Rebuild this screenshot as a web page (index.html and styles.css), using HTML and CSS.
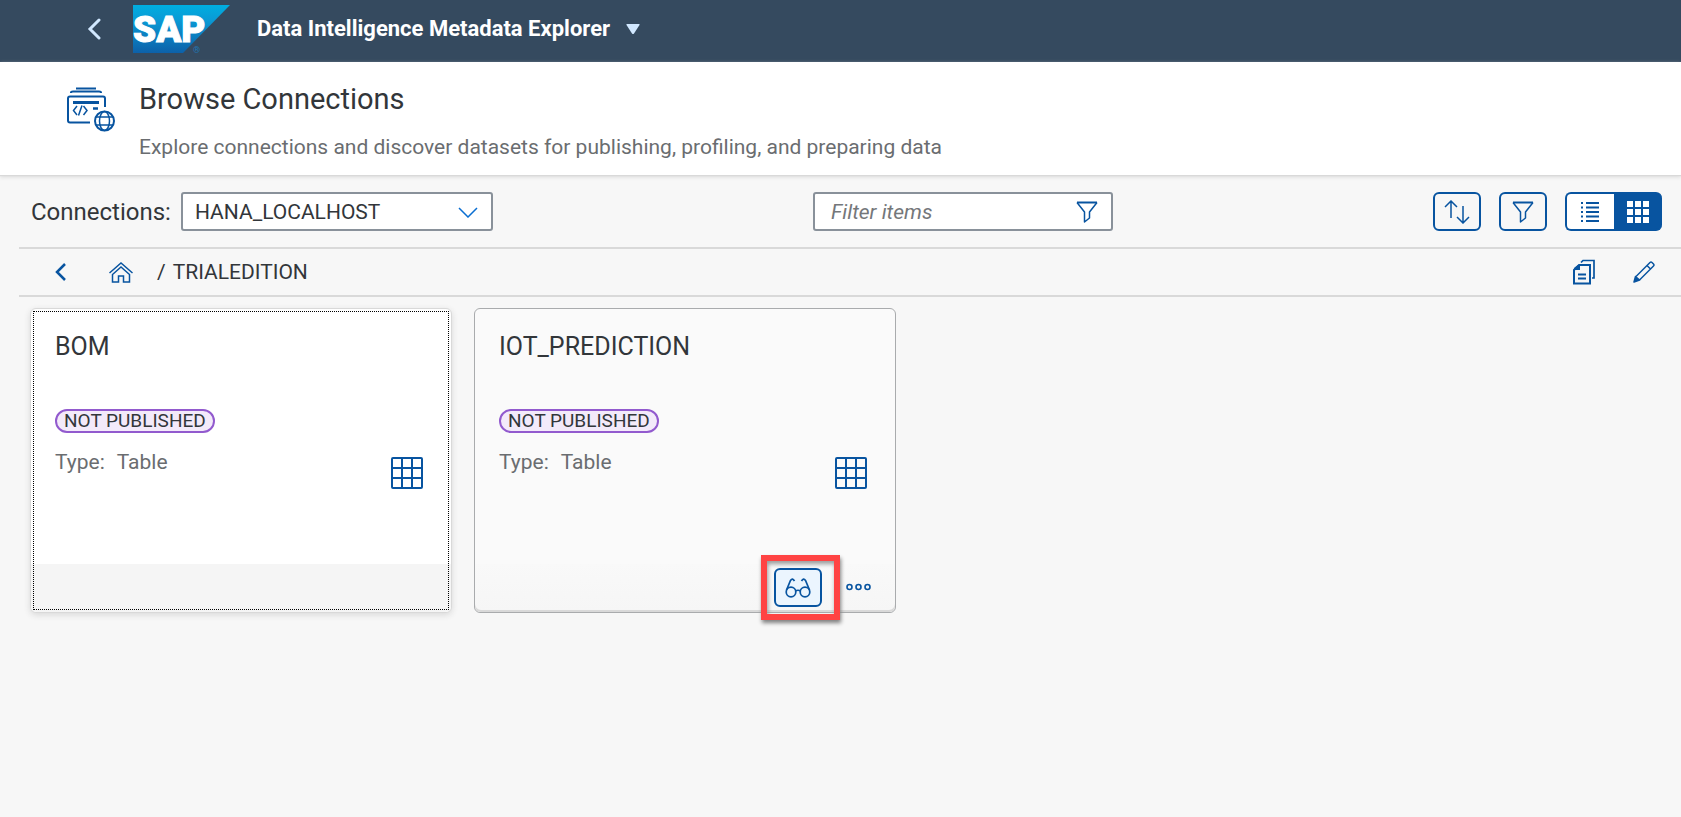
FILE: index.html
```html
<!DOCTYPE html>
<html lang="en">
<head>
<meta charset="utf-8">
<title>Data Intelligence Metadata Explorer</title>
<link rel="stylesheet" href="styles.css">
</head>
<body>
<header class="shell">
  <button class="shell-back" type="button" aria-label="Back">
    <svg width="14" height="22" viewBox="0 0 14 22"><path d="M12 2 3 11l9 9" fill="none" stroke="#d1e8ff" stroke-width="3" stroke-linecap="round"/></svg>
  </button>
  <svg class="logo" width="98" height="56" viewBox="0 -4 98 56" role="img" aria-label="SAP">
    <defs><linearGradient id="logo-fill" x1="0" y1="0" x2="0" y2="1"><stop offset="0" stop-color="#00aee0"/><stop offset=".3" stop-color="#0a9bd6"/><stop offset="1" stop-color="#0d61a9"/></linearGradient></defs>
    <path d="M0 0h97L50 48H0z" fill="url(#logo-fill)"/>
    <text class="logo-text" x="0" y="37">SAP</text>
    <text class="logo-mark" x="60" y="48">®</text>
  </svg>
  <button class="shell-title" type="button">Data Intelligence Metadata Explorer
    <svg width="16" height="12" viewBox="0 0 16 12"><path d="M2 1h12q1 0 .5 1L9 10.500q-1 1-2 0L1.500 2Q1 1 2 1z" fill="#d1e8ff"/></svg>
  </button>
</header>

<section class="page-head">
  <svg class="page-icon" width="50" height="46" viewBox="0 0 50 46" fill="none" stroke="#0854a0" stroke-width="2">
    <path d="M10 1.500h20M5 6V5.500q0-1 2-1h26q2 0 2 1V6M24 35.500H4q-2 0-2-2v-22q0-2 2-2h33q2 0 2 2V20"/>
    <path d="M7 15.500h26" stroke-width="3"/><path d="M27 21.500h5" stroke-width="2.500"/>
    <path d="m11 19-3.500 4.500L11 28M17.500 19l3.500 4.500-3.500 4.500M16 18.500l-3.500 10" stroke-width="1.500"/>
    <circle cx="38.500" cy="34" r="9.500"/><ellipse cx="38.500" cy="34" rx="5" ry="9.500" stroke-width="1.500"/>
    <path d="M30 30h17M30 38h17" stroke-width="1.500"/>
  </svg>
  <div>
    <h1 class="page-title">Browse Connections</h1>
    <p class="page-sub">Explore connections and discover datasets for publishing, profiling, and preparing data</p>
  </div>
</section>

<main class="content">
  <div class="toolbar">
    <div class="connection">
      <label for="connection">Connections:</label>
      <span class="field select-field">
        <select id="connection"><option>HANA_LOCALHOST</option></select>
        <svg class="field-icon" width="20" height="12" viewBox="0 0 20 12"><path d="m1 2 9 9 9-9" fill="none" stroke="#0a6ed1" stroke-width="1.500"/></svg>
      </span>
    </div>
    <span class="field filter-field">
      <input type="text" placeholder="Filter items" aria-label="Filter items">
      <svg class="field-icon" width="22" height="22" viewBox="0 0 22 22"><use href="#funnel"/></svg>
    </span>
    <div class="actions">
      <button class="btn" type="button" aria-label="Sort"><svg width="26" height="24" viewBox="0 0 26 24" fill="none" stroke="#0854a0" stroke-width="1.500"><path d="M7 18V1M1 7l6-6 6 6M19 6v17M13 17l6 6 6-6"/></svg></button>
      <button class="btn" type="button" aria-label="Filter"><svg width="22" height="22" viewBox="0 0 22 22"><g id="funnel" fill="none" stroke="#0854a0"><path d="M1 1.500h20" stroke-width="2"/><path d="M1 1.500 8.500 11v10l5-4v-6L21 1.500" stroke-width="1.500" stroke-linejoin="round"/></g></svg></button>
      <div class="segmented">
        <button class="seg" type="button" aria-label="List view"><svg width="20" height="22" viewBox="0 0 20 22" stroke="#0854a0" stroke-width="2"><path d="M6 2h13M6 6.500h13M6 11h13M6 15.500h13M6 20h13M1 2h2M1 6.500h2M1 11h2M1 15.500h2M1 20h2"/></svg></button>
        <button class="seg seg-on" type="button" aria-label="Grid view" aria-pressed="true"><svg width="22" height="22" viewBox="0 0 22 22" fill="#fff"><path d="M0 0h6v6H0zM8 0h6v6H8zM16 0h6v6h-6zM0 8h6v6H0zM8 8h6v6H8zM16 8h6v6h-6zM0 16h6v6H0zM8 16h6v6H8zM16 16h6v6h-6z"/></svg></button>
      </div>
    </div>
  </div>

  <nav class="crumbs" aria-label="Breadcrumb">
    <button class="icon-btn crumb-back" type="button" aria-label="Up"><svg width="12" height="18" viewBox="0 0 12 18"><path d="M10 1 2 9l8 8" fill="none" stroke="#0854a0" stroke-width="2.500"/></svg></button>
    <a class="crumb-home" href="#" aria-label="Home"><svg width="24" height="21" viewBox="0 0 24 21" fill="none" stroke="#0854a0" stroke-width="1.500"><path d="M.500 11 12 1l11.500 10"/><path d="M3.500 12.500V20h6v-6h5v6h6v-7.500L12 5z"/></svg></a>
    <span class="crumb-sep">/</span>
    <span class="crumb-name">TRIALEDITION</span>
    <div class="crumb-actions">
      <button class="icon-btn" type="button" aria-label="Copy"><svg width="24" height="26" viewBox="0 0 24 26" fill="none" stroke="#0854a0" stroke-width="2"><path d="M7 6h11v18.500H2V11z"/><path d="M2 11V9l4-3h2v5z" fill="#0854a0" stroke="none"/><path d="M9 3.500 11 1.500h11v17.500h-2" stroke-width="1.700"/><path d="M6 15.500h8M6 19.500h8"/></svg></button>
      <button class="icon-btn" type="button" aria-label="Edit"><svg width="22" height="22" viewBox="0 0 22 22" fill="none" stroke="#0854a0" stroke-width="1.500" stroke-linejoin="round"><path d="M3 15.500 17 1.500q1-1 2 0l1.500 1.500q1 1 0 2L6.500 19M14 4.500 17.500 8"/><path d="m1 21 1.500-5.500L6.500 19z" fill="#0854a0"/></svg></button>
    </div>
  </nav>

  <div class="cards">
    <article class="card card-focus" tabindex="0">
      <div class="card-body">
        <h2 class="card-title">BOM</h2>
        <span class="badge">NOT PUBLISHED</span>
        <p class="card-type"><span>Type:</span><span>Table</span></p>
        <svg class="table-icon" width="32" height="32" viewBox="0 0 32 32" fill="none" stroke="#0854a0" stroke-width="2"><rect x="1" y="1" width="30" height="30" rx="1"/><path d="M11 1v30M21 1v30M1 11h30M1 21h30"/></svg>
      </div>
      <div class="card-foot"></div>
    </article>
    <article class="card card-hover" tabindex="0">
      <div class="card-body">
        <h2 class="card-title">IOT_PREDICTION</h2>
        <span class="badge">NOT PUBLISHED</span>
        <p class="card-type"><span>Type:</span><span>Table</span></p>
        <svg class="table-icon" width="32" height="32" viewBox="0 0 32 32" fill="none" stroke="#0854a0" stroke-width="2"><rect x="1" y="1" width="30" height="30" rx="1"/><path d="M11 1v30M21 1v30M1 11h30M1 21h30"/></svg>
      </div>
      <div class="card-foot">
        <button class="btn btn-view" type="button" aria-label="View"><svg width="26" height="22" viewBox="0 0 26 22" fill="none" stroke="#0854a0" stroke-width="1.700"><circle cx="6" cy="16" r="4.800"/><circle cx="20" cy="16" r="4.800"/><path d="M10.500 15q2.500-1.500 5 0M1.500 14 5.500 4.500Q7.500 1.500 9.500 5M24.500 14l-4-9.500q-2-3-4 .500"/></svg></button>
        <button class="icon-btn" type="button" aria-label="More"><svg width="25" height="8" viewBox="0 0 25 8" fill="none" stroke="#0854a0" stroke-width="1.600"><circle cx="3.500" cy="4" r="2.500"/><circle cx="12.500" cy="4" r="2.500"/><circle cx="21.500" cy="4" r="2.500"/></svg></button>
        <span class="marker"></span>
      </div>
    </article>
  </div>
</main>
</body>
</html>
```
FILE: styles.css
```css
* { box-sizing: border-box; }

body {
  margin: 0;
  min-height: 100vh;
  background: #f7f7f7;
  color: #32363a;
  font-family: Roboto, "Liberation Sans", sans-serif;
  font-size: 21px;
  line-height: 24px;
}

button, input, select { font: inherit; color: inherit; }
button { padding: 0; border: 0; background: none; cursor: pointer; }
svg { display: block; flex: none; }
h1, h2, p { margin: 0; font-weight: 400; }

.shell {
  display: flex;
  align-items: center;
  height: 62px;
  padding: 0 24px 4px 87px;
  background: #354a5f;
}
.shell-back { margin-right: 32px; }
.logo-text {
  fill: #fff;
  stroke: #fff;
  stroke-width: 1px;
  font: 900 37px Roboto, sans-serif;
}
.logo-mark { fill: #1f76b5; font-size: 9px; }
.shell-title {
  display: flex;
  align-items: center;
  gap: 15px;
  margin-left: 26px;
  color: #fff;
  font-size: 22px;
  font-weight: 700;
}

.page-head {
  position: relative;
  display: flex;
  gap: 23px;
  padding: 21px 24px 16px 66px;
  background: #fff;
  box-shadow: 0 1px 1px #d9d9d9, 0 2px 4px #d9d9d9;
}
.page-icon { margin-top: 4px; }
.page-title { font-size: 29px; line-height: 32px; }
.page-sub { margin-top: 20px; color: #6a6d70; }

.toolbar {
  display: flex;
  align-items: center;
  justify-content: space-between;
  padding: 17px 19px 16px 31px;
}
.connection { display: flex; align-items: center; gap: 10px; }
.connection label { font-size: 24px; }
.field { position: relative; display: flex; height: 39px; }
.field select, .field input {
  width: 100%;
  padding: 0 48px 0 12px;
  border: 2px solid #89919a;
  border-radius: 3px;
  background: #fff;
  appearance: none;
  outline: 0;
}
.field input { padding-left: 16px; }
.field input::placeholder { color: #74777a; font-style: italic; opacity: 1; }
.select-field { width: 312px; }
.filter-field { width: 300px; }
.field-icon {
  position: absolute;
  top: 0;
  right: 15px;
  bottom: 0;
  margin: auto 0;
  pointer-events: none;
}

.actions { display: flex; gap: 18px; }
.btn, .seg {
  display: grid;
  place-items: center;
  width: 48px;
  height: 39px;
  border: 2px solid #0854a0;
  border-radius: 6px;
}
.segmented { display: flex; }
.seg { width: 49px; padding-right: 2px; border-right: 0; border-radius: 6px 0 0 6px; background: #fff; }
.seg-on { width: 48px; border-radius: 0 6px 6px 0; background: #0854a0; }

.crumbs {
  display: flex;
  align-items: center;
  height: 50px;
  margin-left: 19px;
  padding: 0 26px 0 36px;
  border-top: 2px solid #d9d9d9;
  border-bottom: 2px solid #d9d9d9;
}
.crumb-home { margin-left: 42px; }
.crumb-sep { margin-left: 24px; }
.crumb-name { margin-left: 7px; }
.crumb-actions { display: flex; align-items: center; gap: 37px; margin-left: auto; }

.cards { display: flex; gap: 22px; padding: 11px 30px; }
.card {
  position: relative;
  display: flex;
  flex-direction: column;
  width: 422px;
  border: 1px solid #d9d9d9;
  border-radius: 6px;
  background: #fff;
  box-shadow: 0 2px 6px #d9d9d9;
}
.card:focus { outline: 0; }
.card-focus::after {
  content: "";
  position: absolute;
  inset: 2px;
  border: 1px dotted #000;
  pointer-events: none;
}
.card-hover { border-color: #a9abad; background: #fafafa; box-shadow: inset 0 -2px #d9d9d9; }
.card-body {
  position: relative;
  height: 255px;
  padding: 24px;
}
.card-title { font-size: 25px; line-height: 28px; }
.badge {
  display: block;
  width: max-content;
  height: 24px;
  margin: 48px 0 17px;
  padding: 0 7px;
  border: 2px solid #925ace;
  border-radius: 12px;
  background: #f3eafa;
  font-size: 19px;
  line-height: 19px;
}
.card-type { display: flex; gap: 12px; color: #6a6d70; }
.table-icon { position: absolute; right: 28px; bottom: 75px; }
.card-foot {
  position: relative;
  display: flex;
  align-items: center;
  justify-content: flex-end;
  gap: 24px;
  height: 48px;
  padding: 0 24px 2px;
  border-radius: 0 0 6px 6px;
  background: #f5f5f5;
}
.card-hover .card-foot { background: linear-gradient(#f9f9f9, #f6f6f6); box-shadow: inset 0 -2px #d9d9d9; }
.btn-view { background: #ebf5fe; }

.marker {
  position: absolute;
  top: -9px;
  right: 55px;
  width: 79px;
  height: 65px;
  border: 6px solid #ff4343;
  box-shadow: 1px 3px 4px #808080, inset 1px 3px 4px #999;
  pointer-events: none;
}
```
